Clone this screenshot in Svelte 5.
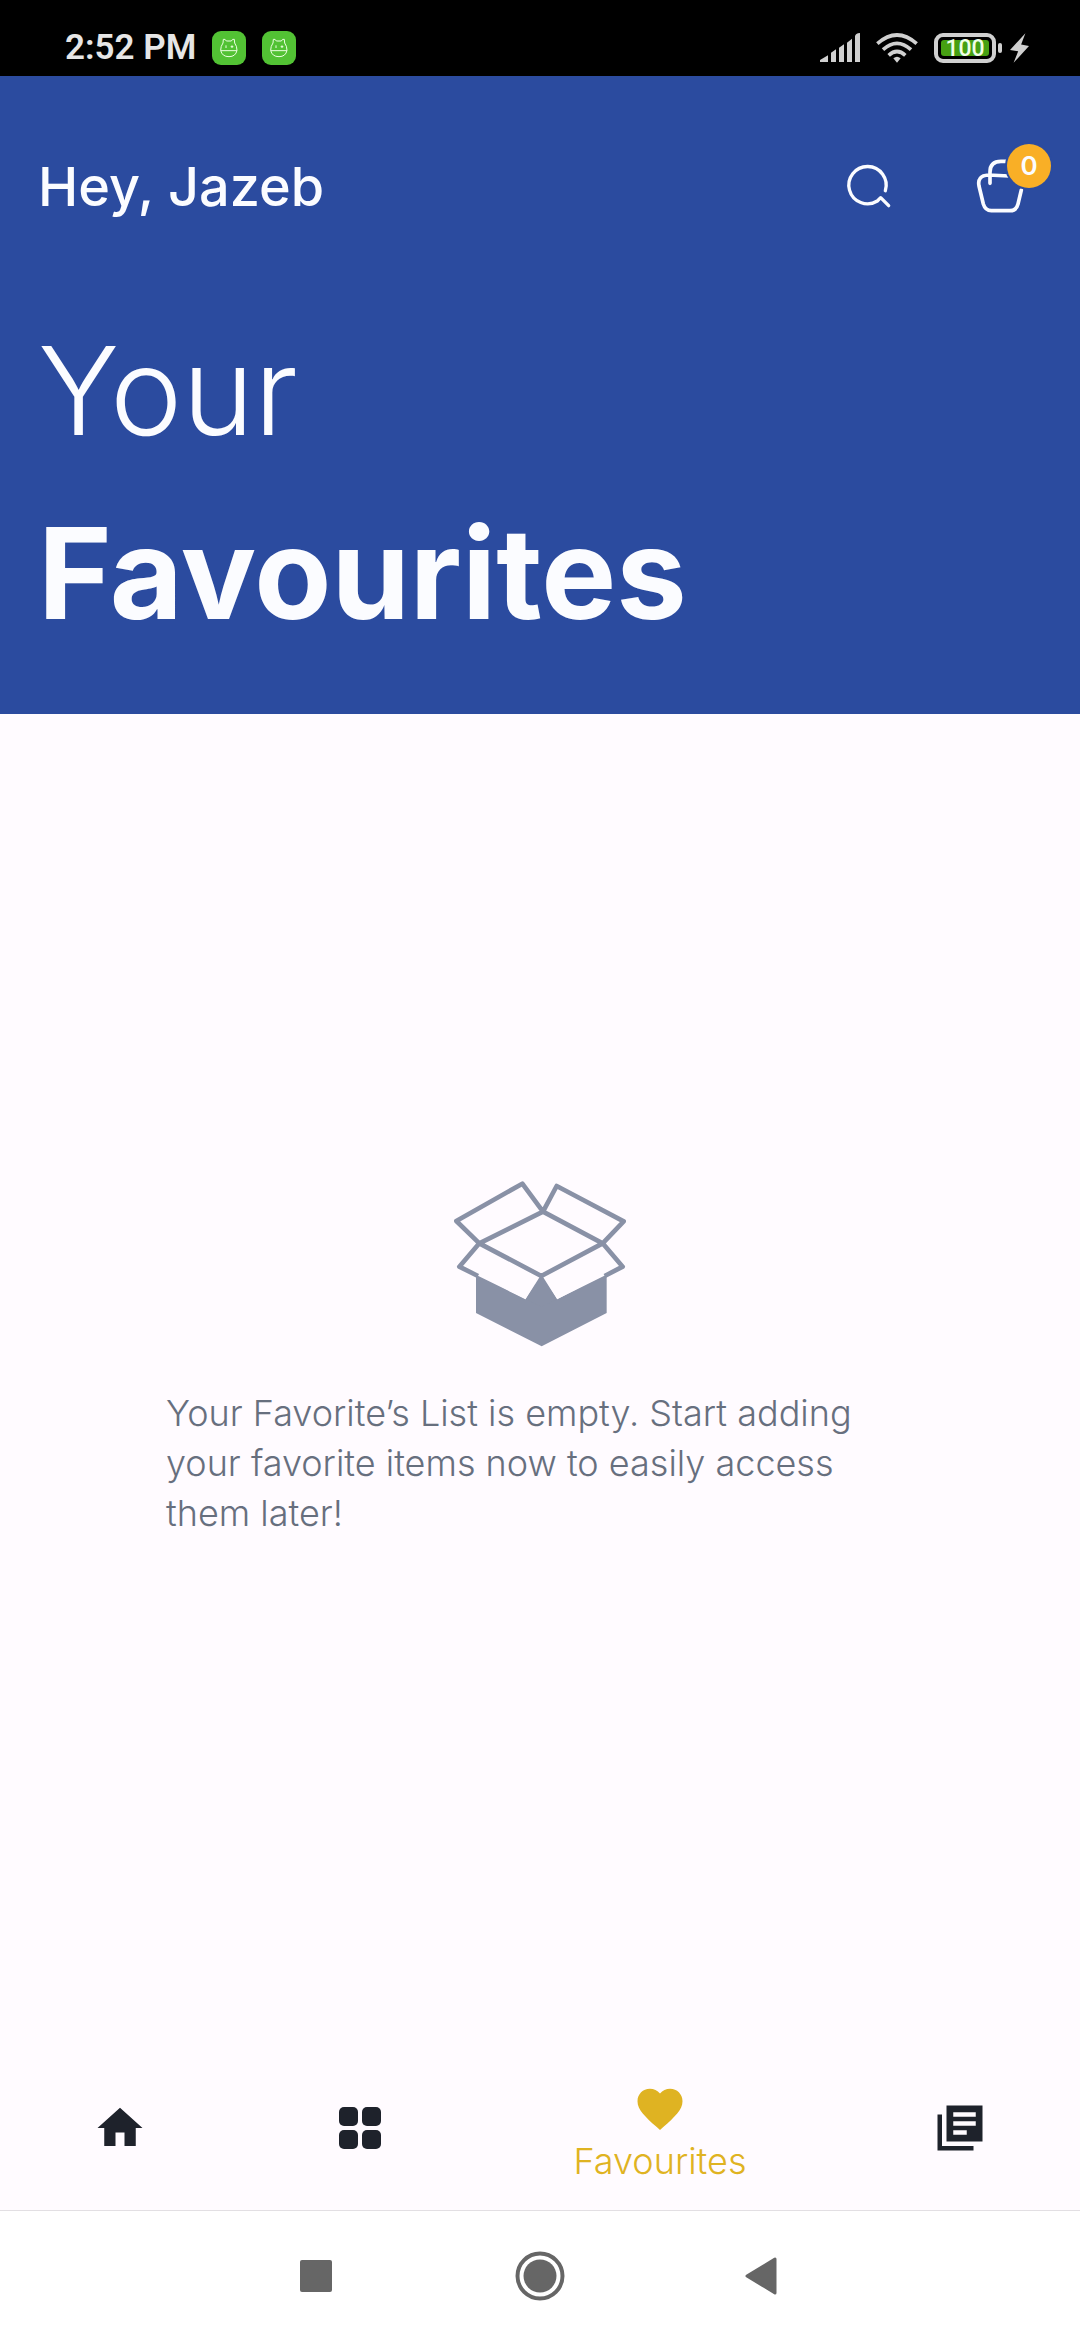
<script>
  const name = 'Jazeb';
  let cartCount = $state(0);
  let active = $state('Favourites');
  const tabs = ['Home', 'Categories', 'Favourites', 'Library'];
</script>

<div class="screen">
  <div class="status">
    <div class="status-left">
      <span class="time">2:52 PM</span>
      {#each [1, 2] as n (n)}
        <svg class="app" viewBox="0 0 102 102" aria-hidden="true">
          <rect width="102" height="102" rx="27" fill="#52c234" />
          <g fill="none" stroke="#eaffdf" stroke-width="3">
            <path d="M33 36L34 25Q40 23 43 30H58Q61 23 67 25L68 36Q75 45 75 58Q71 77 51 77Q30 77 26 58Q26 45 33 36ZM26 59H75" />
            <path d="M42 43V51M60 43V51M56 47H64" />
          </g>
        </svg>
      {/each}
    </div>
    <div class="status-right">
      <svg class="signal" viewBox="0 0 120 90" fill="#d0d0d0" aria-hidden="true">
        <path d="M0 87V81L24 67V87ZM33 87V59L48 49V87ZM57 87V44L72 34V87ZM81 87V29L96 17V87ZM105 87V10Q106 1 120 0V87Z" />
      </svg>
      <svg class="wifi" viewBox="0 0 126 90" fill="none" stroke="#d0d0d0" stroke-width="11" aria-hidden="true">
        <path d="M4 32Q63 -20 122 32M21 50Q63 12 105 50M38 67Q63 44 88 67" />
        <path d="M52 76Q63 66 74 76L63 89Z" fill="#d0d0d0" stroke="none" />
      </svg>
      <div class="power">
        <div class="battery"><span>100</span></div>
        <div class="nub"></div>
        <svg class="bolt" viewBox="0 0 58 90" fill="#d0d0d0" aria-hidden="true"><path d="M47 0L0 51L25 55L11 90L58 39L34 34Z" /></svg>
      </div>
    </div>
  </div>

  <header>
    <div class="topbar">
      <p class="greeting">Hey, {name}</p>
      <div class="actions">
        <button aria-label="Search">
          <svg viewBox="52 81 180 180" fill="none" stroke="#fbfcff" stroke-width="10" stroke-linecap="round" stroke-linejoin="round">
            <path d="M194 182A56 56 0 1 0 170 213L180 203L204 227" />
          </svg>
        </button>
        <button aria-label="Basket">
          <svg viewBox="460 81 180 180" fill="none" stroke="#fbfcff" stroke-width="11" stroke-linecap="round" stroke-linejoin="round">
            <path d="M508 160V126Q508 94 541 94H560M565 138L503 135Q469 137 475 168L488 222Q494 242 512 242H568Q587 242 592 222L602 180" />
          </svg>
          <span class="badge">{cartCount}</span>
        </button>
      </div>
    </div>
    <h1><span>Your</span><strong>Favourites</strong></h1>
  </header>

  <main>
    <svg class="box" viewBox="72 60 516 504" aria-hidden="true">
      <path d="M138 340L287 418L330 340H340L381 418L530 340V459L335 559L138 459Z" fill="#8991a6" />
      <path d="M148 250L334 348L287 418L88 320ZM518 250L334 348L381 418L578 320Z" fill="#fffbff" />
      <g fill="none" stroke="#8991a6" stroke-width="14" stroke-linejoin="round">
        <path d="M339 155L148 250L334 348L518 250ZM339 155L277 71L79 183L148 250M339 155L380 78L581 184L518 250" />
        <path d="M148 250L88 320L144 348M518 250L578 320L524 348" />
      </g>
      <path d="M334 343L287 418L334 440L381 418Z" fill="#8991a6" />
    </svg>
    <p>Your Favorite’s List is empty. Start adding your favorite items now to easily access them later!</p>
  </main>

  <nav class="tabs" aria-label="Main">
    {#each tabs as tab (tab)}
      <button class:active={active === tab} aria-label={tab} onclick={() => (active = tab)}>
        {#if tab === 'Home'}
          <svg viewBox="0 0 24 24"><path d="M10 20v-6h4v6h5v-8h3L12 3 2 12h3v8z" /></svg>
        {:else if tab === 'Categories'}
          <svg viewBox="0 0 54 54"><rect x="6" y="6" width="19" height="19" rx="5" /><rect x="29" y="6" width="19" height="19" rx="5" /><rect x="6" y="29" width="19" height="19" rx="5" /><rect x="29" y="29" width="19" height="19" rx="5" /></svg>
        {:else if tab === 'Favourites'}
          <svg viewBox="0 0 24 24"><path d="M12 21.35l-1.45-1.32C5.4 15.36 2 12.28 2 8.5 2 5.42 4.42 3 7.5 3c1.74 0 3.41.81 4.5 2.09C13.09 3.81 14.76 3 16.5 3 19.58 3 22 5.42 22 8.5c0 3.78-3.4 6.86-8.55 11.54z" /></svg>
        {:else}
          <svg viewBox="0 0 24 24"><path fill-rule="evenodd" d="M4 6H2v16h16v-2H4zM22 2H6v16h16zM19 11H9V9h10zM15 15H9v-2h6zM19 7H9V5h10z" /></svg>
        {/if}
        {#if active === tab}<span>{tab}</span>{/if}
      </button>
    {/each}
  </nav>

  <div class="system">
    <button aria-label="Recent apps"><svg viewBox="0 0 50 50"><rect x="9" y="9" width="32" height="32" rx="2" /></svg></button>
    <button aria-label="Home screen"><svg viewBox="0 0 50 50"><circle cx="25" cy="25" r="22.5" fill="none" stroke="#666" stroke-width="4" /><circle cx="25" cy="25" r="16.5" /></svg></button>
    <button aria-label="Back"><svg viewBox="0 0 50 50"><path d="M36 8V42L8 25Z" stroke="#666" stroke-width="3" stroke-linejoin="round" /></svg></button>
  </div>
</div>

<style>
  :global(body) { margin: 0; }
  .screen {
    min-height: 100vh;
    display: flex;
    flex-direction: column;
    background: #fffbff;
    font-family: Inter, "Liberation Sans", sans-serif;
  }
  svg { display: block; }
  p, h1 { margin: 0; }
  button {
    border: 0;
    padding: 0;
    background: none;
    color: inherit;
    font: inherit;
    cursor: pointer;
  }
  .status {
    box-sizing: border-box;
    height: 76px;
    padding: 20px 51px 0 65px;
    display: flex;
    justify-content: space-between;
    align-items: center;
    background: #000;
    font-family: Roboto, sans-serif;
  }
  .status-left, .status-right, .power { display: flex; align-items: center; }
  .status-left { gap: 16px; }
  .status-right { gap: 16px; }
  .time { color: #e6e6e6; font-size: 35px; font-weight: 600; line-height: 36px; }
  .app { width: 34px; height: 34px; }
  .signal { width: 40px; height: 30px; }
  .wifi { width: 42px; height: 30px; }
  .battery {
    box-sizing: border-box;
    width: 62px;
    height: 30px;
    padding: 3px;
    border: 4px solid #d0d0d0;
    border-radius: 9px;
    display: flex;
  }
  .battery span {
    flex: 1;
    border-radius: 3px;
    background: #46a012;
    color: #f0ffe8;
    font-size: 23px;
    font-weight: 500;
    line-height: 18px;
    text-align: center;
  }
  .nub { width: 4px; height: 10px; margin: 0 8px 0 2px; border-radius: 2px; background: #d0d0d0; }
  .bolt { width: 19px; height: 30px; }

  header { padding: 81px 46px 50px 38px; background: #2b4b9f; color: #fbfcff; }
  .topbar { display: flex; justify-content: space-between; align-items: center; }
  .greeting { font-size: 54px; font-weight: 500; line-height: 60px; }
  .actions { display: flex; gap: 76px; }
  .actions button { position: relative; width: 60px; height: 60px; }
  .badge {
    position: absolute;
    left: 33px;
    top: -13px;
    width: 44px;
    height: 44px;
    border-radius: 50%;
    background: #f9af26;
    box-shadow: 0 0 0 2px #2b4b9f;
    font-size: 26px;
    font-weight: 600;
    line-height: 44px;
    text-align: center;
  }
  h1 { margin-top: 83px; font-size: 126px; line-height: 182px; }
  h1 span, h1 strong { display: block; }
  h1 span { font-size: 122px; font-weight: 300; }
  h1 strong { font-weight: 700; }

  main {
    flex: 1;
    padding: 0 166px 42px;
    display: flex;
    flex-direction: column;
    align-items: center;
    justify-content: center;
    gap: 40px;
  }
  .box { width: 172px; height: 168px; }
  main p { width: 100%; color: #676f7e; font-size: 36px; font-weight: 300; line-height: 50px; }

  .tabs {
    height: 165px;
    display: grid;
    grid-template-columns: 2fr 2fr 3fr 2fr;
    border-bottom: 1px solid #e2dfe3;
    color: #1e222b;
  }
  .tabs button { display: flex; flex-direction: column; align-items: center; justify-content: center; }
  .tabs svg { width: 54px; height: 54px; fill: currentColor; }
  .tabs .active { padding-top: 12px; color: #dfb322; }
  .tabs span { font-size: 36px; font-weight: 300; line-height: 50px; }

  .system {
    height: 129px;
    display: grid;
    grid-template-columns: repeat(3, 224px);
    justify-content: center;
    background: #fff;
  }
  .system button { display: grid; place-items: center; }
  .system svg { width: 50px; height: 50px; fill: #666; }
</style>
